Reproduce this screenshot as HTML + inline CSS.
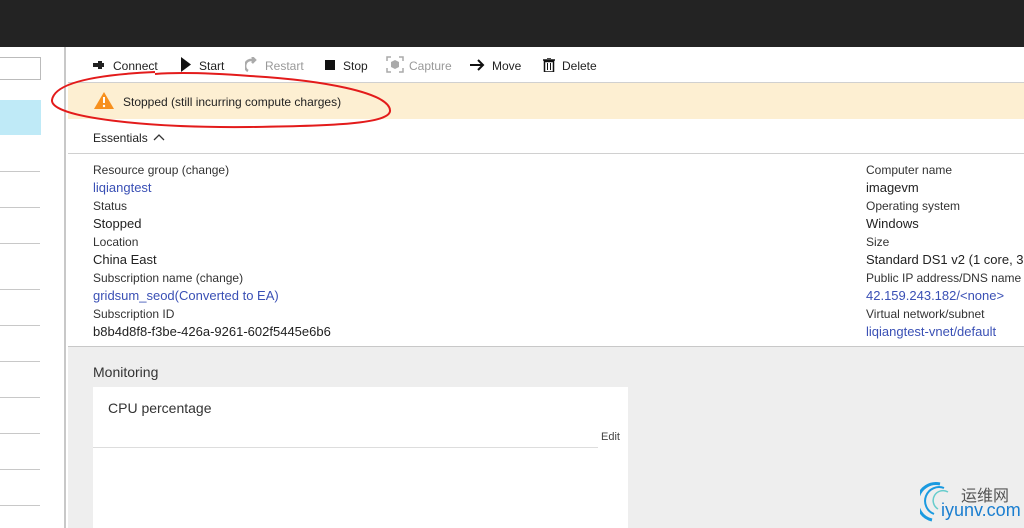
<!DOCTYPE html>
<html><head><meta charset="utf-8"><style>
*{margin:0;padding:0;box-sizing:border-box}
body{width:1024px;height:528px;overflow:hidden;background:#fff;font-family:"Segoe UI","Liberation Sans",sans-serif;font-size:12px;color:#222;position:relative}
.abs{position:absolute}
.top{left:0;top:0;width:1024px;height:47px;background:#232323}
.side{left:0;top:47px;width:66px;height:481px;background:#fff;border-right:2px solid #c8c8c8}
.sl{position:absolute;left:0;width:40px;height:1px;background:#c8c8c8}
.tb span{position:absolute;top:59px;font-size:12px;white-space:nowrap}
.lbl{font-size:12px;color:#333}
.val{font-size:13px;color:#222}
.link{color:#3a50b5}
</style></head><body>
<div class="abs top"></div>
<div class="abs side">
 <div class="abs" style="left:0;top:10px;width:41px;height:23px;border:1px solid #bbb;border-left:none"></div>
 <div class="abs" style="left:0;top:53px;width:41px;height:35px;background:#bfeaf7"></div>
 <div class="sl" style="top:124px"></div><div class="sl" style="top:160px"></div><div class="sl" style="top:196px"></div>
 <div class="sl" style="top:242px"></div><div class="sl" style="top:278px"></div><div class="sl" style="top:314px"></div>
 <div class="sl" style="top:350px"></div><div class="sl" style="top:386px"></div><div class="sl" style="top:422px"></div><div class="sl" style="top:458px"></div>
</div>
<div class="tb">
 <svg class="abs" style="left:92px;top:60px" width="18" height="10"><path d="M1 3h5v-2h4v2h2v4h-2v2h-4v-2h-5z" fill="#222"/></svg>
 <span style="left:113px">Connect</span>
 <svg class="abs" style="left:181px;top:57px" width="10" height="15"><path d="M0 0L10 7.5L0 15z" fill="#111"/></svg>
 <span style="left:199px">Start</span>
 <svg class="abs" style="left:245px;top:57px" width="14" height="15"><path d="M3 14A6 6 0 0 1 5 3L9 3M7 0l3 3-3 3" stroke="#aaa" stroke-width="2.5" fill="none"/></svg>
 <span style="left:265px;color:#999">Restart</span>
 <div class="abs" style="left:325px;top:60px;width:10px;height:10px;background:#111"></div>
 <span style="left:343px">Stop</span>
 <svg class="abs" style="left:386px;top:56px" width="18" height="17"><path d="M1 5V1h4M13 1h4v4M17 12v4h-4M5 16H1v-4" stroke="#aaa" stroke-width="1.5" fill="none"/><path d="M9 4l4 2v5l-4 2-4-2V6z" fill="#aaa"/></svg>
 <span style="left:409px;color:#999">Capture</span>
 <svg class="abs" style="left:470px;top:59px" width="16" height="12"><path d="M0 6h13M8 1l5 5-5 5" stroke="#111" stroke-width="2" fill="none"/></svg>
 <span style="left:492px">Move</span>
 <svg class="abs" style="left:543px;top:58px" width="12" height="14"><path d="M0 2h12M4 0h4M1.5 3.5h9V14h-9z" stroke="#111" stroke-width="1.5" fill="none"/><path d="M4.5 5v7M7.5 5v7" stroke="#111"/></svg>
 <span style="left:562px">Delete</span>
</div>
<div class="abs" style="left:68px;top:82px;width:956px;height:1px;background:#d0d0d0"></div>
<div class="abs" style="left:68px;top:83px;width:956px;height:36px;background:#fdefd2"></div>
<svg class="abs" style="left:93px;top:91px" width="22" height="19"><path d="M11 1L21 18H1z" fill="#f7901e"/><path d="M11 6v6" stroke="#fff" stroke-width="2"/><circle cx="11" cy="15" r="1.2" fill="#fff"/></svg>
<div class="abs" style="left:123px;top:95px;font-size:12px">Stopped (still incurring compute charges)</div>
<div class="abs" style="left:93px;top:131px;font-size:12px">Essentials</div>
<svg class="abs" style="left:153px;top:133px" width="12" height="8"><path d="M1 7l5-5 5 5" stroke="#333" stroke-width="1.3" fill="none"/></svg>
<div class="abs" style="left:68px;top:153px;width:956px;height:1px;background:#d0d0d0"></div>
<div class="abs" style="left:93px;top:161px;line-height:18px;width:400px">
 <div class="lbl">Resource group <span>(change)</span></div><div class="val link">liqiangtest</div>
 <div class="lbl">Status</div><div class="val">Stopped</div>
 <div class="lbl">Location</div><div class="val">China East</div>
 <div class="lbl">Subscription name <span>(change)</span></div><div class="val link">gridsum_seod(Converted to EA)</div>
 <div class="lbl">Subscription ID</div><div class="val">b8b4d8f8-f3be-426a-9261-602f5445e6b6</div>
</div>
<div class="abs" style="left:866px;top:161px;line-height:18px;width:200px;white-space:nowrap">
 <div class="lbl">Computer name</div><div class="val">imagevm</div>
 <div class="lbl">Operating system</div><div class="val">Windows</div>
 <div class="lbl">Size</div><div class="val">Standard DS1 v2 (1 core, 3.5</div>
 <div class="lbl">Public IP address/DNS name la</div><div class="val link">42.159.243.182/&lt;none&gt;</div>
 <div class="lbl">Virtual network/subnet</div><div class="val link">liqiangtest-vnet/default</div>
</div>
<div class="abs" style="left:68px;top:346px;width:956px;height:182px;background:#eeeeee;border-top:1px solid #c8c8c8"></div>
<div class="abs" style="left:93px;top:364px;font-size:14px;color:#333">Monitoring</div>
<div class="abs" style="left:93px;top:387px;width:535px;height:141px;background:#fff"></div>
<div class="abs" style="left:108px;top:400px;font-size:14px;color:#333">CPU percentage</div>
<div class="abs" style="left:93px;top:447px;width:505px;height:1px;background:#ddd"></div>
<div class="abs" style="left:601px;top:431px;font-size:11px;color:#444">Edit</div>
<svg class="abs" style="left:0;top:0" width="1024" height="528"><path d="M155 72C110 74 55 80 52 100C50 118 150 128 250 127C330 126 392 124 390 110C388 92 320 80 250 76C210 73 180 72 155 74" stroke="#e31b1b" stroke-width="2" fill="none"/></svg>
<svg class="abs" style="left:920px;top:481px" width="40" height="42"><path d="M20 3A18 18 0 0 0 12 39" stroke="#1a9ae0" stroke-width="3" fill="none"/><path d="M24 7A13 13 0 0 0 14 33" stroke="#1a9ae0" stroke-width="2" fill="none"/><path d="M28 11A9 9 0 0 0 18 28" stroke="#6cc" stroke-width="1.5" fill="none"/></svg>
<div class="abs" style="left:961px;top:482px;font-size:16px;color:#555;font-family:'Liberation Sans','Noto Sans CJK SC',sans-serif">运维网</div>
<div class="abs" style="left:941px;top:500px;font-size:18px;color:#1a7ed0;font-family:'Liberation Sans',sans-serif">iyunv.com</div>
</body></html>
